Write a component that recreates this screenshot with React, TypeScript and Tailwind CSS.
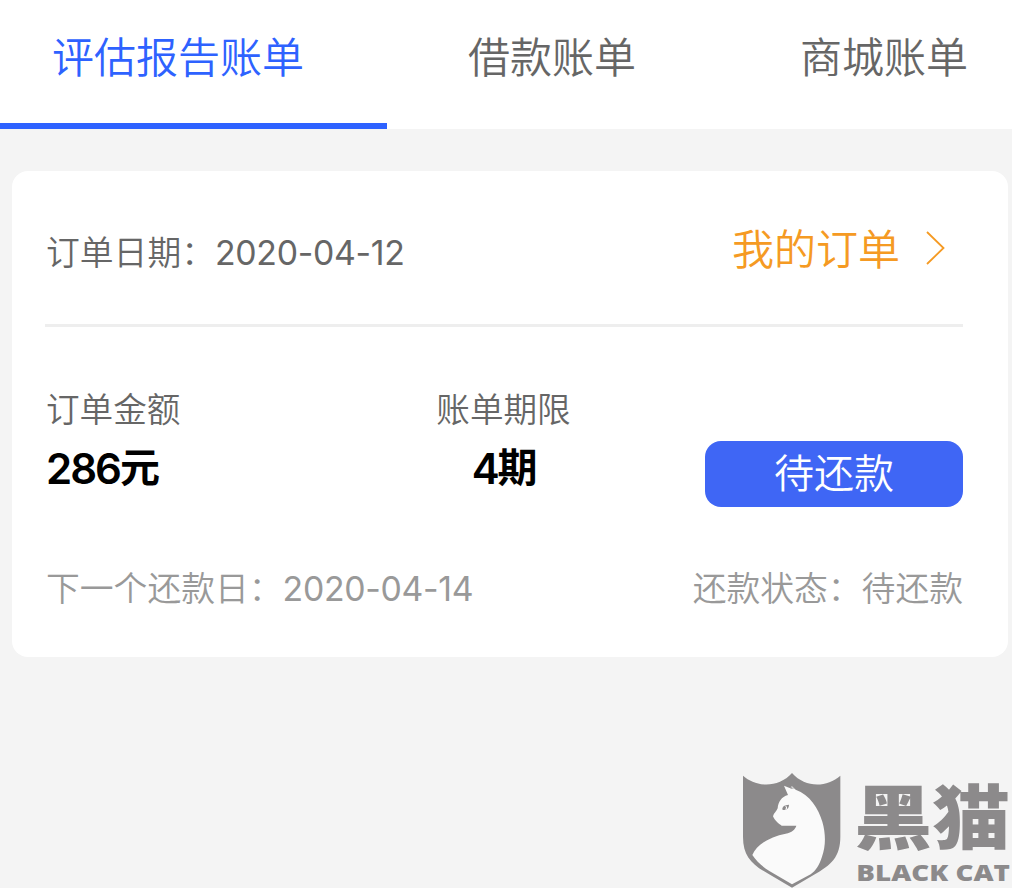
import React, { useState } from "react";

const tabs = [
  { key: "report", title: "评估报告账单", box: "w-[387px] pl-[52px]" },
  { key: "loan", title: "借款账单", box: "w-[330px] pl-[81px]" },
  { key: "mall", title: "商城账单", box: "w-[295px] pl-[83px]" },
];

const order = {
  date: "2020-04-12",
  amount: 286,
  period: 4,
  nextDate: "2020-04-14",
  status: "待还款",
};

const BlackCatLogo = () => (
  <div className="absolute left-[732px] top-[764px] w-[280px] h-[124px]">
    <svg width="280" height="124" viewBox="0 0 840 372">
      {/* Shield */}
      <path
        d="M33 35C72 70 139 73 180 27C221 73 285 70 325 35V218C325 278 298 303 246 332L180 371L114 332C61 303 33 278 33 218Z"
        fill="#8c8a8b"
      />
      {/* Cat */}
      <path
        d="M156 65L173 72L180 67L191 77C233 91 260 135 271 173C282 212 281 247 270 278C262 303 252 319 236 331L180 361L112 321C90 307 75 293 61 273C75 239 116 218 161 209C180 205 189 197 193 185H149C140 180 128 169 123 157C125 147 134 142 137 133C139 113 148 99 168 93Z"
        fill="#fafafa"
      />
      <path d="M173 68L187 73L176 74Z" fill="#8c8a8b" />
      <path d="M151 134C152 127 157 123 171 122C171 132 165 138 152 138Z" fill="#8c8a8b" />
      <path d="M158 124L165 128V134L160 138L162 130Z" fill="#fafafa" />
      <g fill="#8c8a8b">
        <text
          x="0"
          y="0"
          transform="translate(367 239) scale(1 0.9)"
          fontSize="236"
          textLength="468"
          lengthAdjust="spacingAndGlyphs"
          className="font-['Noto_Sans_CJK_SC',sans-serif] font-black"
        >
          黑猫
        </text>
        <text
          x="373"
          y="350"
          fontSize="71"
          textLength="461"
          lengthAdjust="spacingAndGlyphs"
          className="font-['Open_Sans',sans-serif] font-extrabold"
        >
          BLACK CAT
        </text>
      </g>
    </svg>
  </div>
);

const App = () => {
  const [activeTab, setActiveTab] = useState("report");

  return (
    <div className="relative w-[1012px] h-[888px] overflow-hidden bg-[#f4f4f4] font-['Inter','Noto_Sans_CJK_SC',sans-serif] font-[350] text-[#666666]">
      {/* Tabs */}
      <div className="flex h-[129px] bg-white">
        {tabs.map((tab) => (
          <button
            key={tab.key}
            onClick={() => setActiveTab(tab.key)}
            className={`shrink-0 flex items-start pt-[28px] border-b-6 text-[42px] leading-[60px] whitespace-nowrap cursor-pointer ${tab.box} ${
              activeTab === tab.key ? "text-[#2e62ff] border-[#2e62ff]" : "border-transparent"
            }`}
          >
            {tab.title}
          </button>
        ))}
      </div>

      {/* Order card */}
      <div className="mt-[42px] ml-3 mr-1 h-[486px] rounded-2xl bg-white pl-[33px] pr-[45px]">
        <div className="flex justify-between h-[156px] border-b-3 border-[#eeeeee]">
          <p className="mt-[57px] pl-px text-[33.800px] leading-[50px]">
            订单日期：<span className="font-normal tracking-[-0.300px]">{order.date}</span>
          </p>
          <a className="mt-[49px] flex items-start text-[42px] leading-[60px] text-[#f59a23]">
            我的订单
            <svg className="mt-[10px] ml-[25px] mr-[16px]" width="22" height="36" viewBox="0 0 22 36" fill="none">
              <path d="M2 2L18.500 18L2 34" stroke="#f59a23" strokeWidth="1.800" />
            </svg>
          </a>
        </div>

        <div className="flex h-[220px] pt-[58px]">
          <div className="w-[391px]">
            <p className="pl-px text-[33.600px] leading-[50px]">订单金额</p>
            <p className="mt-[4px] pl-px text-[42px] leading-[60px] tracking-[-2px] font-semibold text-black">
              {order.amount}
              <span className="inline-block text-[40px] leading-none -translate-y-[2px]">元</span>
            </p>
          </div>
          <div className="w-[135px] text-center">
            <p className="text-[33.600px] leading-[50px] whitespace-nowrap">账单期限</p>
            <p className="mt-[4px] text-[42px] leading-[60px] tracking-[-2.200px] font-semibold text-black">
              {order.period}
              <span className="inline-block text-[40px] leading-none -translate-y-[2px]">期</span>
            </p>
          </div>
          <button className="mt-[56px] ml-auto w-[258px] h-[66px] rounded-2xl bg-[#3f66f5] text-[40px] leading-[60px] text-white">
            {order.status}
          </button>
        </div>

        <div className="flex justify-between pt-[17px] text-[33.800px] leading-[50px] text-[#999999]">
          <p className="pl-px">
            下一个还款日：<span className="font-normal tracking-[-0.300px]">{order.nextDate}</span>
          </p>
          <p>还款状态：{order.status}</p>
        </div>
      </div>

      <BlackCatLogo />
    </div>
  );
};

export default App;
